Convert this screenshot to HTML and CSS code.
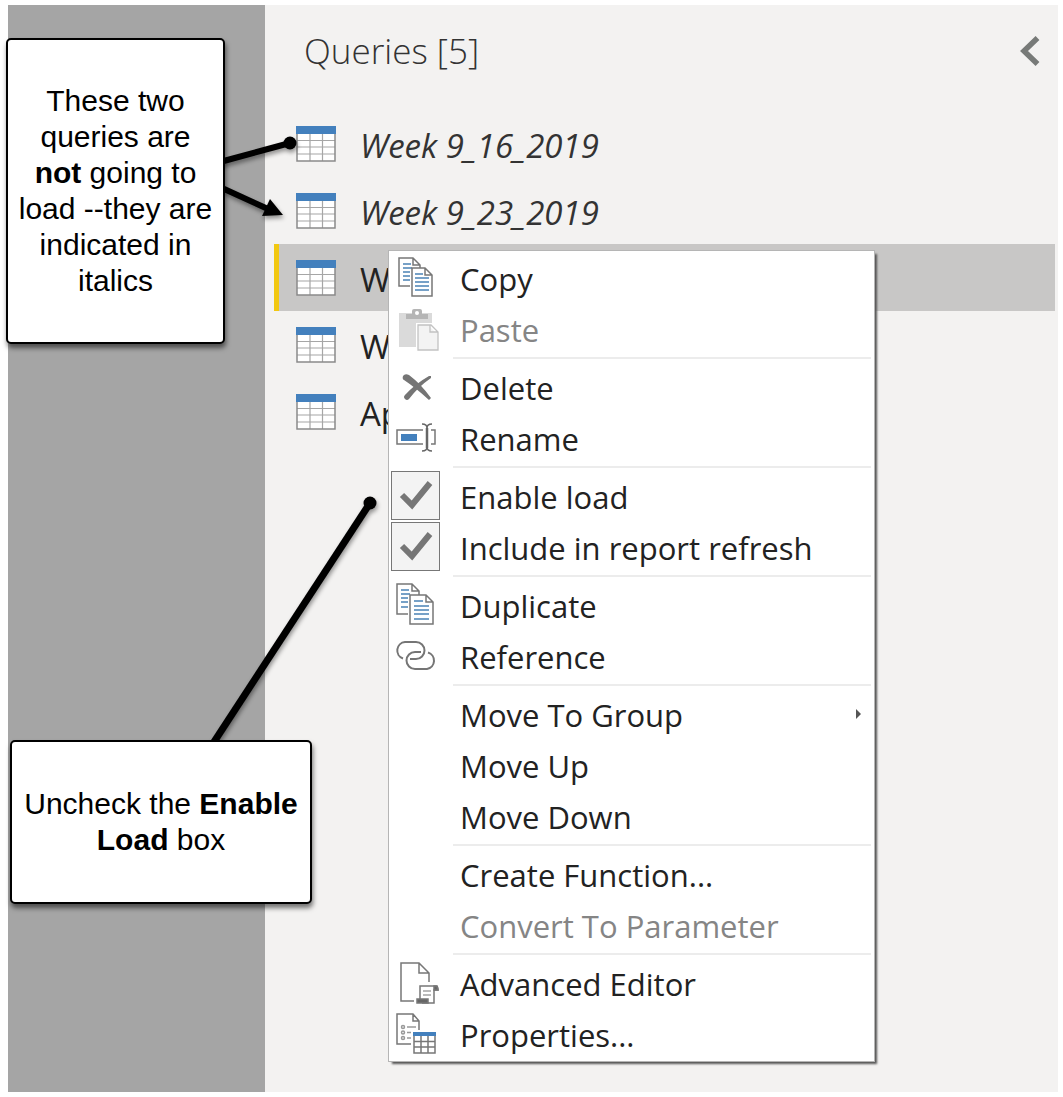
FILE: index.html
```html
<!DOCTYPE html>
<html lang="en">
<head>
<meta charset="utf-8">
<meta name="viewport" content="width=device-width, initial-scale=1">
<title>Queries</title>
<link rel="stylesheet" href="styles.css">
</head>
<body>
<svg class="defs" aria-hidden="true">
  <symbol id="table" viewBox="0 0 40 36">
    <rect x="1" y="1" width="38" height="34" fill="#fff"/>
    <path d="M1 14.500h38M1 21h38M1 28h38M14 8v27M26.500 8v27" stroke="#a6a6a6" stroke-width="1.200" fill="none"/>
    <path d="M1 8v27h38V8" fill="none" stroke="#8a8a8a" stroke-width="1.500"/>
    <rect width="40" height="8" fill="#4380bd"/>
  </symbol>
</svg>
<main class="editor">
  <aside class="rail"></aside>
  <section class="pane">
    <header class="pane-head">
      <h1>Queries [5]</h1>
      <button class="collapse" aria-label="Collapse queries">
        <svg width="22" height="32" viewBox="0 0 22 32"><path d="M18.500 3 5 16l13.500 13" fill="none" stroke="#777a78" stroke-width="5.500"/></svg>
      </button>
    </header>
    <ul class="queries">
      <li class="query unloaded"><svg class="table-icon"><use href="#table"/></svg><span>Week 9_16_2019</span></li>
      <li class="query unloaded"><svg class="table-icon"><use href="#table"/></svg><span>Week 9_23_2019</span></li>
      <li class="query selected"><svg class="table-icon"><use href="#table"/></svg><span>W</span></li>
      <li class="query"><svg class="table-icon"><use href="#table"/></svg><span>W</span></li>
      <li class="query"><svg class="table-icon"><use href="#table"/></svg><span>Ap</span></li>
    </ul>

    <div class="menu">
      <button class="item">
        <svg class="icon" viewBox="-1 0 49 51" fill="none" stroke="#777" stroke-width="1.500">
          <path d="M18 34H7V6h14l7 7v3M21 6v7h7"/>
          <path d="M11 12h8M11 16h9M11 20h7M11 24h7M11 28h7" stroke="#4b83b5" stroke-width="1.500"/>
          <path d="M20 16h13l7 7v21H20zM33 16v7h7" fill="#fff"/>
          <path d="M23 22h8M23 26h14M23 30h14M23 34h14M23 38h14" stroke="#4b83b5" stroke-width="1.500"/>
        </svg>
        <span>Copy</span>
      </button>
      <button class="item" disabled>
        <svg class="icon" viewBox="-1 0 49 51">
          <path d="M7 10h33v34H7z" fill="#dadada"/>
          <path d="M14 16v-5h6V8q0-2 2-2h6q2 0 2 2v3h6v5z" fill="#b5b5b5"/>
          <circle cx="25" cy="10" r="2" fill="#fff"/>
          <path d="M26 22h13l7 7v18H26z" fill="#f3f3f3" stroke="#fff" stroke-width="4"/>
          <path d="M26 22h13l7 7v18H26zM38 22v7h8" fill="#f3f3f3" stroke="#c2c2c2" stroke-width="1.300"/>
        </svg>
        <span>Paste</span>
      </button>
      <hr>
      <button class="item">
        <svg class="icon" viewBox="-1 0 49 51" fill="#757575">
          <path d="M11 15q2-3 6-1 12 9 22 23l-2 2Q24 27 12 19q-2-1-1-4z"/>
          <path d="M39 15v2Q26 26 17 38q-2 2-4 0-2-2 0-4Q23 23 37 15z"/>
        </svg>
        <span>Delete</span>
      </button>
      <button class="item">
        <svg class="icon" viewBox="-1 0 49 51" fill="none" stroke="#777" stroke-width="1.500">
          <path d="M31 18H5v14h26M39 18h4v14h-4"/>
          <path d="M9 22h16v7H9z" fill="#4380bd" stroke="none"/>
          <path d="M35 16v20" stroke="#666" stroke-width="2.500"/>
          <path d="M30 12q5 0 5 4 0-4 5-4M30 39q5 0 5-4 0 4 5 4" stroke="#666" stroke-width="1.600"/>
        </svg>
        <span>Rename</span>
      </button>
      <hr>
      <label class="item">
        <span class="tick"><input type="checkbox" checked><svg class="icon" viewBox="-1 0 49 51"><path d="M10 25l10 10L38 13" fill="none" stroke="#767676" stroke-width="6"/></svg></span>
        <span>Enable load</span>
      </label>
      <label class="item">
        <span class="tick"><input type="checkbox" checked><svg class="icon" viewBox="-1 0 49 51"><path d="M10 25l10 10L38 13" fill="none" stroke="#767676" stroke-width="6"/></svg></span>
        <span>Include in report refresh</span>
      </label>
      <hr>
      <button class="item">
        <svg class="icon" viewBox="-1 0 49 51" fill="none" stroke="#777" stroke-width="1.500">
          <path d="M16 35H5V5h15l7 7v4M20 5v7h7"/>
          <path d="M9 11h8M9 15h9M9 19h7M9 23h7M9 28h7" stroke="#4b83b5" stroke-width="1.500"/>
          <path d="M18 16h16l7 7v22H18zM34 16v7h7" fill="#fff"/>
          <path d="M22 22h9M22 27h15M22 31h15M22 35h15M22 40h15" stroke="#4b83b5" stroke-width="1.500"/>
        </svg>
        <span>Duplicate</span>
      </button>
      <button class="item">
        <svg class="icon" viewBox="-1 0 49 51" fill="none" stroke="#757575" stroke-width="2">
          <path d="M11 28.500A8.500 8.500 0 0 1 13 12h11a8.500 8.500 0 0 1 0 17h-6"/>
          <path d="M36 22.500A8.500 8.500 0 0 1 35 39H23a8.500 8.500 0 0 1 0-17h6"/>
        </svg>
        <span>Reference</span>
      </button>
      <hr>
      <button class="item">
        <span class="icon"></span><span>Move To Group</span>
        <svg class="more" width="6" height="10" viewBox="0 0 6 10"><path d="M0 0l5 5-5 5z" fill="#555"/></svg>
      </button>
      <button class="item"><span class="icon"></span><span>Move Up</span></button>
      <button class="item"><span class="icon"></span><span>Move Down</span></button>
      <hr>
      <button class="item"><span class="icon"></span><span>Create Function...</span></button>
      <button class="item" disabled><span class="icon"></span><span>Convert To Parameter</span></button>
      <hr>
      <button class="item">
        <svg class="icon" viewBox="-1 0 49 51" fill="none" stroke="#777" stroke-width="1.500">
          <path d="M22 44H9V6h18l10 10v9M27 6v10h10"/>
          <path d="M28 42V29h16q2 0 2 4h-4v13H30"/>
          <path d="M31 34h8M31 38h8" stroke-width="1.200"/>
          <path d="M42 29h3l1 4h-4zM25 42h11v4H25z" fill="#666"/>
        </svg>
        <span>Advanced Editor</span>
      </button>
      <button class="item">
        <svg class="icon" viewBox="-1 0 49 51" fill="none" stroke="#777" stroke-width="1.500">
          <path d="M19 36H5V6h16l6 7v9M21 6v7h6"/>
          <g stroke="#999"><circle cx="11" cy="19" r="1.500"/><circle cx="11" cy="24.500" r="1.500"/><circle cx="11" cy="30" r="1.500"/><path d="M15 19h9M15 24.500h4M15 30h4"/></g>
          <path d="M22 28v17h21V28M22 33.500h21M22 39h21M29 28v17M36 28v17"/>
          <path d="M21 24h23v4H21z" fill="#4380bd" stroke="none"/>
        </svg>
        <span>Properties...</span>
      </button>
    </div>
  </section>

  <svg class="pointers" width="400" height="780" viewBox="0 0 400 780" stroke="#000" stroke-width="6" aria-hidden="true">
    <path d="M220 162 290 143"/>
    <circle cx="290" cy="143" r="6.500" stroke="none"/>
    <path d="M222 188 268 209"/>
    <path d="M270 199 283 215 262 216z" stroke="none"/>
    <path d="M370 503 212 745" stroke-width="7"/>
    <circle cx="370" cy="503" r="6.500" stroke="none"/>
  </svg>
  <p class="callout italics-note">These two queries are <b>not</b> going to load <span class="keep">--they</span> are indicated in italics</p>
  <p class="callout load-note">Uncheck the <b>Enable Load</b> box</p>
</main>
</body>
</html>
```
FILE: styles.css
```css
* { box-sizing: border-box; }

body {
  margin: 0;
  background: #fff;
  color: #222;
  font-family: "Open Sans", "Noto Sans", sans-serif;
  font-size: 31px;
}

.defs { display: none; }

.editor {
  display: flex;
  min-height: 100vh;
  padding: 5px 5px 5px 8px;
  position: relative;
}

.rail {
  flex: 0 0 257px;
  background: #a5a5a5;
}

.pane {
  flex: 1;
  min-width: 0;
  position: relative;
  padding: 0 3px 0 9px;
  background: #f3f2f1;
}

.pane-head {
  display: flex;
  align-items: center;
  justify-content: space-between;
  height: 105px;
  padding: 0 14px 14px 30px;
}

h1 {
  margin: 0;
  color: #333;
  font-size: 35px;
  font-weight: 300;
}

.collapse {
  display: flex;
  padding: 0;
  border: 0;
  background: none;
}

.queries {
  margin: 0;
  padding: 0;
  list-style: none;
}

.query {
  display: flex;
  align-items: center;
  gap: 24px;
  height: 67px;
  padding: 0 0 0 17px;
  border-left: 5px solid transparent;
  font-size: 33px;
}

.unloaded { font-style: italic; color: #333; }

.selected {
  border-left-color: #f2c811;
  background: #c8c7c6;
}

.table-icon {
  width: 40px;
  height: 36px;
}

.query span { padding-top: 3px; }

.menu {
  position: absolute;
  top: 245px;
  left: 123px;
  width: 487px;
  padding: 1px 2px 2px;
  border: 1px solid #b5b5b5;
  background: #fff;
  box-shadow: 3px 3px 2px -1px #555;
}

.item {
  display: flex;
  align-items: center;
  gap: 20px;
  width: 100%;
  height: 51px;
  padding: 0;
  border: 0;
  background: none;
  color: #222;
  font: inherit;
  text-align: left;
}

.item > span:not(.icon):not(.tick) { padding-top: 2px; }

.item:disabled { color: #858585; }

.icon {
  flex: none;
  width: 49px;
  height: 51px;
}

.tick {
  display: grid;
  place-items: center;
  width: 49px;
}

.tick > * { grid-area: 1 / 1; }

.tick .icon { pointer-events: none; }

.tick input {
  appearance: none;
  width: 49px;
  height: 49px;
  margin: 0;
  border: 1px solid #777;
  background: #f3f3f3;
}

.more {
  margin-left: auto;
  margin-right: 10px;
}

hr {
  height: 2px;
  margin: 3px 1px 2px 62px;
  border: 0;
  background: #ececec;
}

.pointers {
  position: absolute;
  top: 0;
  left: 0;
  pointer-events: none;
  filter: drop-shadow(1px 3px 2px #0006);
}

.callout {
  position: absolute;
  margin: 0;
  border: 2px solid #000;
  border-radius: 5px;
  background: #fff;
  box-shadow: 1px 4px 5px #0008;
  color: #000;
  font: 30px/36px "Liberation Sans", Arial, sans-serif;
  text-align: center;
}

.keep { white-space: nowrap; }

.italics-note {
  top: 38px;
  left: 6px;
  width: 219px;
  padding: 43px 6px;
}

.load-note {
  top: 740px;
  left: 10px;
  width: 302px;
  padding: 44px 6px;
}
```
